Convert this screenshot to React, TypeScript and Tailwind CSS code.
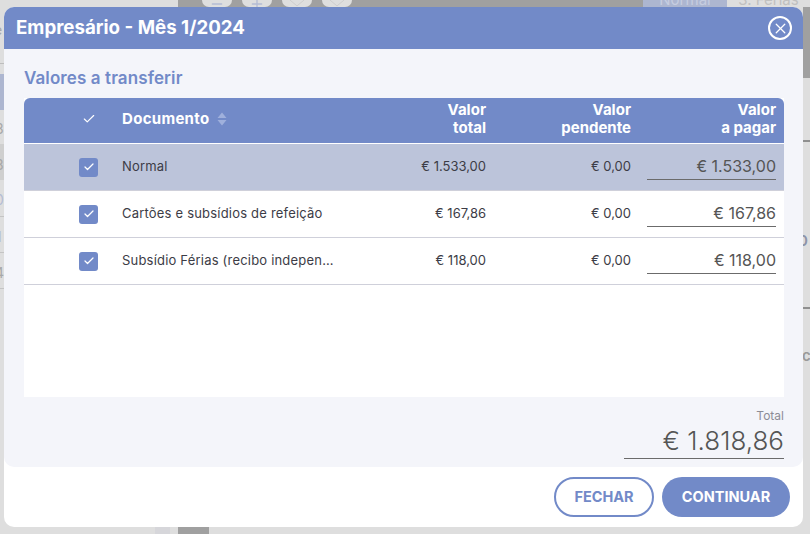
import { Check, Minus, Plus, X } from "lucide-react";

const ROWS = [
  { name: "Normal", total: "€ 1.533,00", pending: "€ 0,00", pay: "€ 1.533,00", active: true },
  { name: "Cartões e subsídios de refeição", total: "€ 167,86", pending: "€ 0,00", pay: "€ 167,86", active: false },
  { name: "Subsídio Férias (recibo independente)", total: "€ 118,00", pending: "€ 0,00", pay: "€ 118,00", active: false },
];

const GRID = "grid grid-cols-[98px_217px_147px_145px_153px] items-center";

function Backdrop() {
  return (
    <div aria-hidden="true" className="absolute inset-0 overflow-hidden text-[#9a9a9a]">
      {/* top toolbar */}
      <div className="absolute left-[178px] top-0 flex h-[7px] w-[465px] gap-[10px] bg-[#a0a0a0] pl-[24px]">
        <div className="flex h-[7px] w-[30px] items-end justify-center rounded-b-[12px] bg-[#dedede] text-[#b4bcd4]">
          <Minus className="size-4 shrink-0 translate-y-[5px]" />
        </div>
        <div className="flex h-[7px] w-[30px] items-end justify-center rounded-b-[12px] bg-[#dedede] text-[#b4bcd4]">
          <Plus className="size-4 shrink-0 translate-y-[5px]" />
        </div>
        {[0, 1].map((i) => (
          <div key={i} className="flex h-[7px] w-[30px] items-end justify-center rounded-b-[12px] bg-[#dedede]">
            <svg viewBox="0 0 20 7" className="h-[7px] w-5 fill-none stroke-[#cdcdcd]">
              <path d="M3 0 10 6 17 0" />
            </svg>
          </div>
        ))}
      </div>
      <div className="absolute left-[643px] top-0 flex h-[7px] w-[167px] text-[15px] leading-none">
        <div className="flex w-[84px] items-end justify-center bg-[#adb6d0] text-[#c6cde0]">Normal</div>
        <div className="flex flex-1 items-end justify-center text-[#c0c0c0]">3. Férias</div>
      </div>

      {/* left list */}
      <span className="absolute left-[-6px] top-[19px] text-[14px] text-[#a8a8a8]">e</span>
      <div className="absolute left-0 top-[63px] h-px w-1 bg-[#bdbdbd]" />
      <div className="absolute left-0 top-[74px] h-9 w-1 bg-[#adb6d0]" />
      <span className="absolute left-[-5px] top-[118px] text-[14px] text-[#a8a8a8]">3</span>
      <div className="absolute left-0 top-[144px] h-9 w-1 bg-[#cfcfcf]" />
      <span className="absolute left-[-5px] top-[154px] text-[14px] text-[#a8a8a8]">3</span>
      <span className="absolute left-[-5px] top-[189px] text-[14px] text-[#b4bcd4]">0</span>
      <div className="absolute left-0 top-[216px] h-px w-1 bg-[#c4c4c4]" />
      <span className="absolute left-[-4px] top-[226px] text-[14px] text-[#b4bcd4]">1</span>
      <div className="absolute left-0 top-[252px] h-px w-1 bg-[#c4c4c4]" />
      <span className="absolute left-[-5px] top-[262px] text-[14px] text-[#a8a8a8]">4</span>
      <div className="absolute left-0 top-[288px] h-px w-1 bg-[#c4c4c4]" />

      {/* right side */}
      <div className="absolute right-0 top-[7px] h-[71px] w-[7px] bg-[#a0a0a0]" />
      <div className="absolute right-0 top-[140px] h-0.5 w-[7px] bg-[#8f8f8f]" />
      <div className="absolute right-0 top-[307px] h-0.5 w-[7px] bg-[#8f8f8f]" />
      <span className="absolute left-[798px] top-[230px] text-[15px] font-semibold text-[#8d94a8]">0</span>
      <span className="absolute left-[802px] top-[345px] text-[15px] font-semibold text-[#9a9a9a]">c</span>

      {/* bottom bar */}
      <div className="absolute left-[155px] top-[527px] h-[7px] w-[15px] bg-[#d6d6da]" />
      <div className="absolute left-[178px] top-[527px] h-[7px] w-[31px] bg-[#a0a0a0]" />
    </div>
  );
}

function CheckBox() {
  return (
    <div className="flex size-[19px] items-center justify-center rounded-[3px] bg-[#728ac8]">
      <Check className="size-3 text-white" strokeWidth={2.5} />
    </div>
  );
}

function SortIcon() {
  return (
    <svg viewBox="0 0 10 14" className="ml-2 h-[14px] w-[10px] fill-[#9fb0dc]">
      <path d="M5 0.5 9.5 6H0.5Z" />
      <path d="M5 13.5 0.5 8H9.5Z" />
    </svg>
  );
}

export default function App() {
  return (
    <div
      className="relative h-[534px] w-[810px] overflow-hidden bg-[#dedede] pl-1 pt-[7px]"
      style={{ fontFamily: '"Inter", "Noto Sans", sans-serif' }}
    >
      <Backdrop />
      <div className="relative flex h-[520px] w-[799px] flex-col rounded-[10px] bg-white">
        <header className="flex h-[42px] shrink-0 items-center justify-between rounded-t-[10px] bg-[#728ac8] pl-3 pr-[11px]">
          <h1 className="text-[18.7px] font-bold text-white">Empresário - Mês 1/2024</h1>
          <button className="flex size-6 items-center justify-center rounded-full border-2 border-white text-white">
            <X className="size-[17px]" strokeWidth={1.75} />
          </button>
        </header>

        <main className="flex h-[418px] flex-col rounded-b-[10px] bg-[#f4f5fa] pl-5 pr-[19px] pt-[20px]">
          <h2 className="h-[29px] text-[17px] font-semibold leading-[19px] tracking-[0.1px] text-[#728ac8]">
            Valores a transferir
          </h2>

          <div className="h-[299px] bg-white">
            <div className={`${GRID} h-[46px] rounded-t-[6px] border-b border-white bg-[#728ac8] pb-[3px] text-[15px] font-bold leading-[18px] text-white`}>
              <div className="pl-[58px]">
                <Check className="size-3.5" strokeWidth={2} />
              </div>
              <div className="flex items-center tracking-[0.3px]">
                Documento
                <SortIcon />
              </div>
              <div className="text-right">Valor<br />total</div>
              <div className="text-right">Valor<br />pendente</div>
              <div className="pr-2 text-right">Valor<br />a pagar</div>
            </div>

            {ROWS.map((row) => (
              <div
                key={row.name}
                className={`${GRID} h-[47px] border-b border-[#cfd0da] text-[13px] text-[#3c3c46] ${row.active ? "bg-[#bcc4da]" : "bg-white"}`}
              >
                <div className="pl-[55px]">
                  <CheckBox />
                </div>
                <div className="truncate pr-1 tracking-[0.2px]">{row.name}</div>
                <div className="text-right">{row.total}</div>
                <div className="text-right">{row.pending}</div>
                <div className="pl-[16px] pr-2">
                  <div className="flex h-[26px] items-center justify-end border-b border-[#6b6b6b] pb-0.5 text-[16px] text-[#555]">
                    {row.pay}
                  </div>
                </div>
              </div>
            ))}
          </div>

          <div className="mt-[12px] flex flex-col items-end">
            <span className="text-xs leading-[14px] text-[#8c8c96]">Total</span>
            <div className="flex h-9 w-40 items-center justify-end border-b border-[#6b6b6b] text-[26px] font-light text-[#555]">
              € 1.818,86
            </div>
          </div>
        </main>

        <footer className="flex flex-1 items-start justify-end gap-2 pr-[13px] pt-2.5">
          <button className="h-10 w-[100px] rounded-full border-2 border-[#728ac8] text-[14.5px] font-bold text-[#728ac8]">
            FECHAR
          </button>
          <button className="h-10 w-32 rounded-full bg-[#728ac8] text-[14.5px] font-bold text-white">CONTINUAR</button>
        </footer>
      </div>
    </div>
  );
}
